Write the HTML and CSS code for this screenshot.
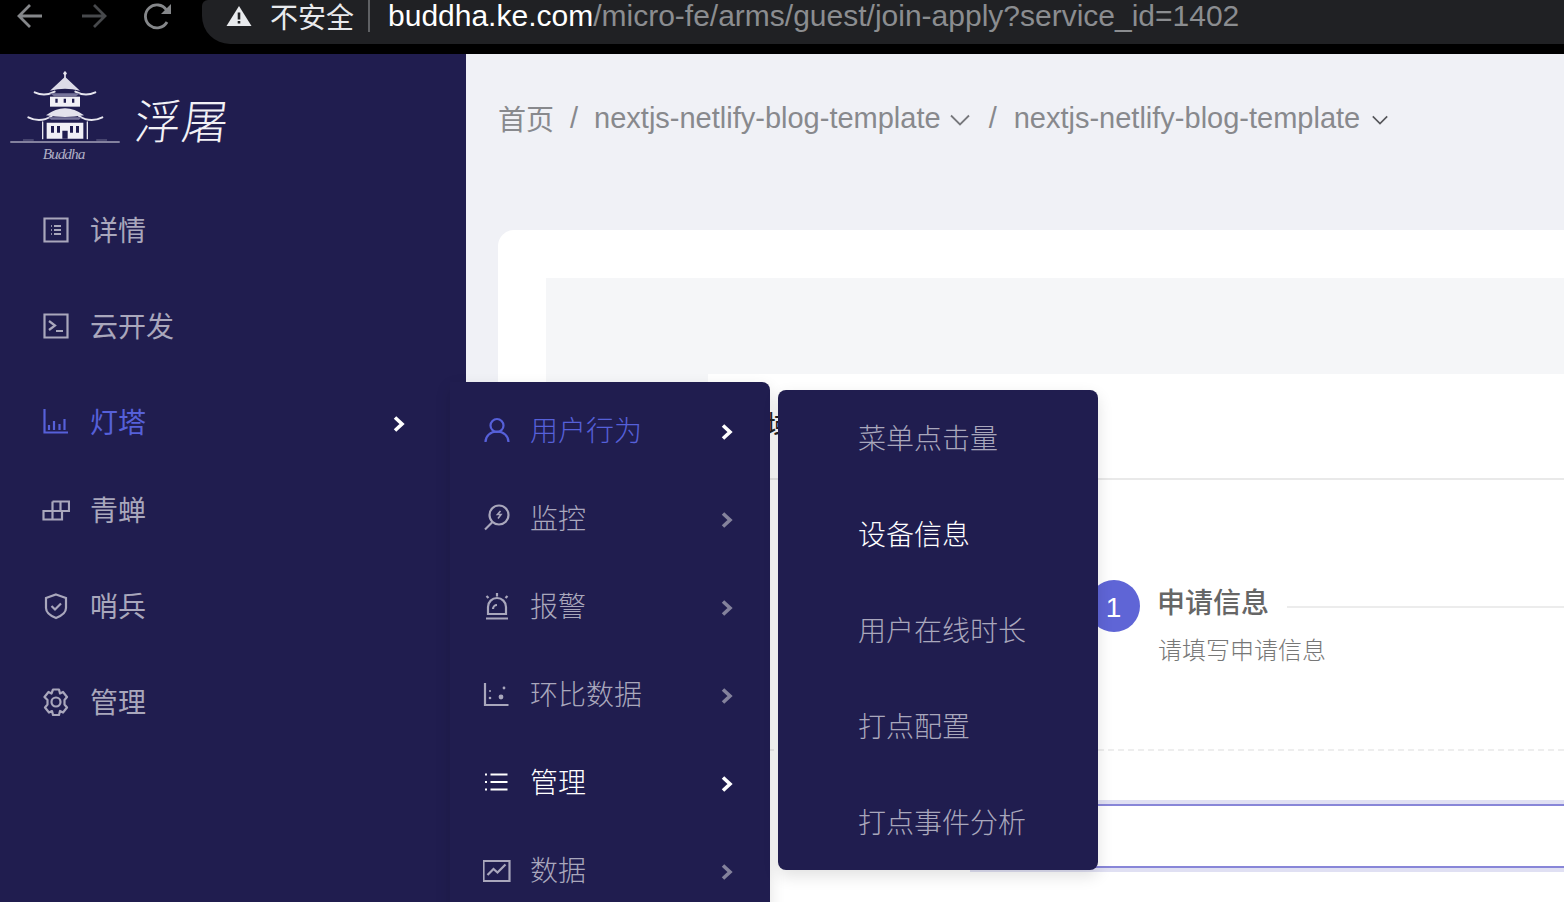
FILE: index.html
```html
<!DOCTYPE html>
<html lang="zh-CN">
<head>
  <meta charset="UTF-8">
  <meta name="viewport" content="width=device-width, initial-scale=1.0">
  <title>浮屠</title>
  <link rel="stylesheet" href="styles.css">
</head>
<body>
  <div class="page">
    <!-- browser bar -->
    <div class="chrome">
      <div class="nav-btns">
        <svg class="nav-ico" viewBox="0 0 28 28"><path d="M26 14H4M14 3 3 14l11 11"/></svg>
        <svg class="nav-ico nav-off" viewBox="0 0 28 28"><path d="M2 14h22M14 3l11 11-11 11"/></svg>
        <svg class="nav-ico" viewBox="0 0 28 28"><path d="M23 20a11.500 11.500 0 1 1-.5-12"/><path class="nav-fill" d="M27 2v10H17z"/></svg>
      </div>
      <div class="address">
        <svg class="warn" viewBox="0 0 26 22"><path d="M13 1 25.500 21H.5z" fill="#e8eaed"/><path d="M11.700 7.500h2.600v7h-2.600zM11.700 16h2.600v2.600h-2.600z" fill="#202124"/></svg>
        <span class="insecure">不安全</span>
        <span class="addr-sep"></span>
        <span class="url"><b>buddha.ke.com</b>/micro-fe/arms/guest/join-apply?service_id=1402</span>
      </div>
    </div>

    <div class="layout">
      <aside class="sidebar">
        <div class="logo">
          <svg class="logo-mark" viewBox="0 0 390 330">
            <g fill="none" stroke="#e6e5ee" stroke-linecap="round">
              <path d="M195 36v20" stroke-width="5"/>
              <path d="M104 97q30 14 60-2M286 97q-30 14-60-2" stroke-width="6"/>
              <path d="M85 172q36 18 70-4M307 172q-36 18-70-4" stroke-width="6"/>
              <path d="M128 186v50M262 186v50" stroke-width="4"/>
              <path d="M32 246h326" stroke-width="3"/>
              <path d="M70 240h30M290 240h30" stroke-width="2" opacity=".6"/>
            </g>
            <circle cx="195" cy="40" r="5" fill="#e6e5ee"/>
            <path d="M195 50 240 92q-45-12-90 0z" fill="#dcdbe7"/>
            <path d="M150 100h90l-12 9h-66z" fill="#77759b"/>
            <path d="M150 110h90v30h-90z" fill="#f1f0f6"/>
            <path d="M166 116h7v12h-7zM191 116h7v12h-7zM216 116h7v12h-7z" fill="#201d4f"/>
            <path d="M138 166q57-42 114 0q-57 10-114 0z" fill="#e3e2ec"/>
            <path d="M145 172h100l-8 7h-84z" fill="#77759b"/>
            <path d="M140 188h110v48h-110z" fill="#f1f0f6"/>
            <path d="M153 198h9v20h-9zM171 198h9v20h-9zM210 198h9v20h-9zM228 198h9v20h-9zM187 212h16v24h-16z" fill="#201d4f"/>
            <text x="128" y="296" class="logo-script" textLength="128">Buddha</text>
          </svg>
          <span class="logo-name">浮屠</span>
        </div>

        <nav class="menu">
          <a class="menu-item">
            <svg class="ico" viewBox="0 0 28 28"><path d="M2.500 2.500h23v23h-23z"/><path d="M12 10h7M12 14h7M12 18h7M9 10h.8M9 14h.8M9 18h.8"/></svg>
            <span>详情</span>
          </a>
          <a class="menu-item">
            <svg class="ico" viewBox="0 0 28 28"><path d="M2.500 2.500h23v23h-23z"/><path d="m7 9 6 4.500L7 18M14 19h7"/></svg>
            <span>云开发</span>
          </a>
          <a class="menu-item active open">
            <svg class="ico" viewBox="0 0 28 28"><path d="M2.500 1v23.500H26M7 17v5M12 13v9M17.500 16v6M22.500 11v11"/></svg>
            <span>灯塔</span>
            <svg class="chev" viewBox="0 0 14 18"><path d="m3 2.500 7 6.500-7 6.500"/></svg>
          </a>
          <a class="menu-item">
            <svg class="ico" viewBox="0 0 28 28"><path d="M10.500 5.500h16.500v9.500H20M10.500 5.500V15M18.500 5.500V15M1.500 15h18.500v8.500H1.500zM10.500 15v8.500"/></svg>
            <span>青蝉</span>
          </a>
          <a class="menu-item">
            <svg class="ico" viewBox="0 0 28 28"><path d="M14 2.500 24 6v10c0 5-5 8-10 10-5-2-10-5-10-10V6z"/><path d="m9.500 14 3.500 3.500 6-6"/></svg>
            <span>哨兵</span>
          </a>
          <a class="menu-item">
            <svg class="ico" viewBox="0 0 28 28"><path d="m11 1.500h6l1 4 3-1.500 4 5-2.500 3v4.500l2.500 3-4 5-3-1.500-1 4h-6l-1-4-3 1.500-4-5 2.500-3V12L2.500 9l4-5 3 1.500z" stroke-linejoin="round"/><circle cx="14" cy="14" r="4.500"/></svg>
            <span>管理</span>
          </a>
        </nav>
      </aside>

      <main class="main">
        <div class="crumbs">
          <span class="crumb-home">首页</span>
          <span class="crumb-sep">/</span>
          <span>nextjs-netlify-blog-template</span>
          <svg class="crumb-arrow" viewBox="0 0 20 12"><path d="m1 1.500 9 9 9-9"/></svg>
          <span class="crumb-sep sep-two">/</span>
          <span>nextjs-netlify-blog-template</span>
          <svg class="crumb-arrow arrow-dark" viewBox="0 0 20 12"><path d="m2 2 8 8 8-8"/></svg>
        </div>

        <section class="card">
          <div class="card-inner">
            <div class="panel">
              <div class="panel-title">域</div>
              <div class="steps">
                <div class="step-num">1</div>
                <div class="step-body">
                  <div class="step-head">
                    <span class="step-title">申请信息</span>
                    <span class="step-line"></span>
                  </div>
                  <div class="step-desc">请填写申请信息</div>
                </div>
              </div>
              <div class="field"></div>
            </div>
          </div>
        </section>
      </main>
    </div>

    <!-- flyout menus -->
    <div class="flyout flyout-one">
      <a class="fly-item active">
        <svg class="ico" viewBox="0 0 28 28"><circle cx="14" cy="9.500" r="6.500"/><path d="M2.500 26c0-6 5-10.500 11.500-10.500S25.500 20 25.500 26"/></svg>
        <span>用户行为</span>
        <svg class="chev" viewBox="0 0 14 18"><path d="m3 2.500 7 6.500-7 6.500"/></svg>
      </a>
      <a class="fly-item">
        <svg class="ico" viewBox="0 0 28 28"><circle cx="16" cy="11" r="9.500"/><path d="M9.500 18 2 25.500"/><path class="thin" d="M17.500 7l-3 3.500h3.500L15 14.500"/></svg>
        <span>监控</span>
        <svg class="chev dim" viewBox="0 0 14 18"><path d="m3 2.500 7 6.500-7 6.500"/></svg>
      </a>
      <a class="fly-item">
        <svg class="ico" viewBox="0 0 28 28"><path d="M5 22v-7a9 9 0 0 1 18 0v7zM3 26.500h22M14 1v3.500M3.500 4l2 2M24.500 4l-2 2M10 17a4 4 0 0 1 4-4"/></svg>
        <span>报警</span>
        <svg class="chev dim" viewBox="0 0 14 18"><path d="m3 2.500 7 6.500-7 6.500"/></svg>
      </a>
      <a class="fly-item">
        <svg class="ico" viewBox="0 0 28 28"><path d="M2 3v22h23.500"/><circle class="dot" cx="7" cy="18" r="1.300"/><circle class="dot" cx="18" cy="17" r="2.400"/><circle class="dot" cx="21" cy="8" r="1.400"/><circle class="dot" cx="7" cy="11" r="1"/></svg>
        <span>环比数据</span>
        <svg class="chev dim" viewBox="0 0 14 18"><path d="m3 2.500 7 6.500-7 6.500"/></svg>
      </a>
      <a class="fly-item current">
        <svg class="ico" viewBox="0 0 28 28"><path d="M7.500 6.500h17M7.500 14h17M7.500 21.500h17M2 6.500h2M2 14h2M2 21.500h2"/></svg>
        <span>管理</span>
        <svg class="chev" viewBox="0 0 14 18"><path d="m3 2.500 7 6.500-7 6.500"/></svg>
      </a>
      <a class="fly-item">
        <svg class="ico" viewBox="0 0 28 28"><path d="M.5 5h26v20H.5z"/><path d="m4.500 19 6-6 4 3.500 8-8"/></svg>
        <span>数据</span>
        <svg class="chev dim" viewBox="0 0 14 18"><path d="m3 2.500 7 6.500-7 6.500"/></svg>
      </a>
    </div>

    <div class="flyout flyout-two">
      <a class="sub-item">菜单点击量</a>
      <a class="sub-item current">设备信息</a>
      <a class="sub-item">用户在线时长</a>
      <a class="sub-item">打点配置</a>
      <a class="sub-item">打点事件分析</a>
    </div>
  </div>
</body>
</html>
```

FILE: styles.css
```css
* {
  box-sizing: border-box;
}

body {
  margin: 0;
  font-family: "Liberation Sans", "Noto Sans CJK SC", sans-serif;
}

.page {
  position: relative;
  width: 1564px;
  height: 902px;
  overflow: hidden;
  background-color: #f0f1f6;
}

/* browser bar */
.chrome {
  display: flex;
  height: 54px;
  background-color: #000;
}

.nav-btns {
  display: flex;
  gap: 36px;
  width: 202px;
  padding: 2px 0 0 16px;
}

.nav-ico {
  width: 28px;
  height: 28px;
  fill: none;
  stroke: #85878a;
  stroke-width: 2.800;
}

.nav-off {
  stroke: #47494c;
}

.nav-fill {
  fill: #85878a;
  stroke: none;
}

.address {
  display: flex;
  align-items: center;
  flex: 1;
  height: 44px;
  padding: 0 0 12px 24px;
  background-color: #202124;
  border-radius: 6px 0 0 28px;
  font-size: 30px;
  white-space: nowrap;
}

.warn {
  width: 26px;
  height: 22px;
}

.insecure {
  margin-left: 18px;
  color: #e8eaed;
  font-size: 28px;
}

.addr-sep {
  width: 2px;
  height: 32px;
  margin: 0 18px 0 14px;
  background-color: #5f6164;
}

.url {
  color: #8b8d90;
}

.url b {
  color: #fff;
  font-weight: 400;
}

.layout {
  display: flex;
  height: 848px;
}

/* sidebar */
.sidebar {
  width: 466px;
  flex-shrink: 0;
  background-color: #201d4f;
}

.logo {
  display: flex;
  align-items: flex-start;
  height: 132px;
}

.logo-mark {
  width: 130px;
  height: 110px;
  margin-top: 6px;
  flex-shrink: 0;
}

.logo-script {
  fill: #b0afc5;
  font-family: "Liberation Serif", serif;
  font-style: italic;
  font-size: 46px;
}

.logo-name {
  margin: 34px 0 0 5px;
  color: #f2f1f6;
  font-family: "Noto Sans CJK SC", sans-serif;
  font-size: 47px;
  font-weight: 300;
  line-height: 62px;
  transform: skewX(-6deg);
}

.menu-item {
  display: flex;
  align-items: center;
  gap: 20px;
  height: 88px;
  margin-bottom: 8px;
  padding: 0 60px 0 42px;
  color: #a9a7bc;
  font-family: "Noto Sans CJK SC", sans-serif;
  font-size: 28px;
}

.menu-item.open {
  margin-bottom: 0;
}

.menu-item span,
.fly-item span {
  padding-bottom: 2px;
}

.ico {
  width: 28px;
  height: 28px;
  flex-shrink: 0;
  fill: none;
  stroke: currentColor;
  stroke-width: 2.200;
}

.ico .thin {
  stroke-width: 1.600;
}

.dot {
  fill: currentColor;
  stroke: none;
}

.chev {
  width: 14px;
  height: 18px;
  margin: 4px 0 0 auto;
  fill: none;
  stroke: #fff;
  stroke-width: 3.600;
}

.chev.dim {
  stroke: #84829c;
}

.active {
  color: #5660d9;
}

/* main area */
.main {
  flex: 1;
  min-width: 0;
  padding-left: 32px;
}

.crumbs {
  display: flex;
  align-items: center;
  height: 128px;
  margin-bottom: 48px;
  color: #88898d;
  font-size: 29px;
  white-space: nowrap;
}

.crumb-home {
  font-size: 28px;
}

.crumb-sep {
  margin: 0 16px;
}

.sep-two {
  margin: 0 17px 0 19px;
}

.crumb-arrow {
  width: 20px;
  height: 12px;
  margin: 4px 0 0 9px;
  fill: none;
  stroke: #77787c;
  stroke-width: 1.800;
}

.arrow-dark {
  width: 18px;
  margin-left: 11px;
  stroke: #55565a;
}

.card {
  height: 700px;
  padding: 48px 0 0 48px;
  background-color: #fff;
  border-radius: 16px 0 0 0;
}

.card-inner {
  height: 100%;
  padding: 96px 0 0 162px;
  background-color: #f5f6f8;
}

.panel {
  height: 100%;
  background-color: #fff;
}

.panel-title {
  height: 106px;
  padding: 32px 0 0 58px;
  border-bottom: 2px solid #e9e9e9;
  color: #222;
  font-family: "Noto Sans CJK SC", sans-serif;
  font-size: 28px;
  line-height: 36px;
}

.steps {
  display: flex;
  gap: 18px;
  height: 271px;
  padding: 100px 0 0 380px;
  border-bottom: 2px dashed #eee;
}

.step-num {
  flex-shrink: 0;
  width: 52px;
  height: 52px;
  padding-right: 1px;
  border-radius: 50%;
  background-color: #5f65d6;
  color: #fff;
  font-size: 28px;
  line-height: 55px;
  text-align: center;
}

.step-body {
  flex: 1;
  min-width: 0;
}

.step-head {
  display: flex;
  align-items: center;
  gap: 18px;
  height: 42px;
  margin-left: -1px;
}

.step-title {
  color: #666;
  font-family: "Noto Sans CJK SC", sans-serif;
  font-size: 28px;
  font-weight: 500;
}

.step-line {
  flex: 1;
  height: 2px;
  margin-top: 11px;
  background-color: #ececec;
}

.step-desc {
  margin-top: 9px;
  color: #777;
  font-family: "Noto Sans CJK SC", sans-serif;
  font-size: 24px;
  font-weight: 300;
  line-height: 36px;
}

.field {
  height: 64px;
  margin: 53px 0 0 266px;
  border: 2px solid #8886d8;
  border-right: 0;
  box-shadow: 0 0 0 4px #e0e0f3;
}

/* flyout menus */
.flyout {
  position: absolute;
  background-color: #201d4f;
  font-family: "Noto Sans CJK SC", sans-serif;
  font-size: 28px;
  font-weight: 300;
  color: #a9a7bc;
  box-shadow: 0 6px 16px rgba(0, 0, 0, 0.12);
}

.flyout-one {
  left: 450px;
  top: 382px;
  width: 320px;
  height: 540px;
  padding-top: 4px;
  border-radius: 0 8px 0 0;
}

.flyout-two {
  left: 778px;
  top: 390px;
  width: 320px;
  height: 480px;
  border-radius: 8px;
}

.fly-item {
  display: flex;
  align-items: center;
  gap: 19px;
  height: 88px;
  padding: 0 36px 0 33px;
}

.sub-item {
  display: block;
  height: 96px;
  padding: 0 0 2px 80px;
  line-height: 94px;
}

.current {
  color: #fff;
}
```
